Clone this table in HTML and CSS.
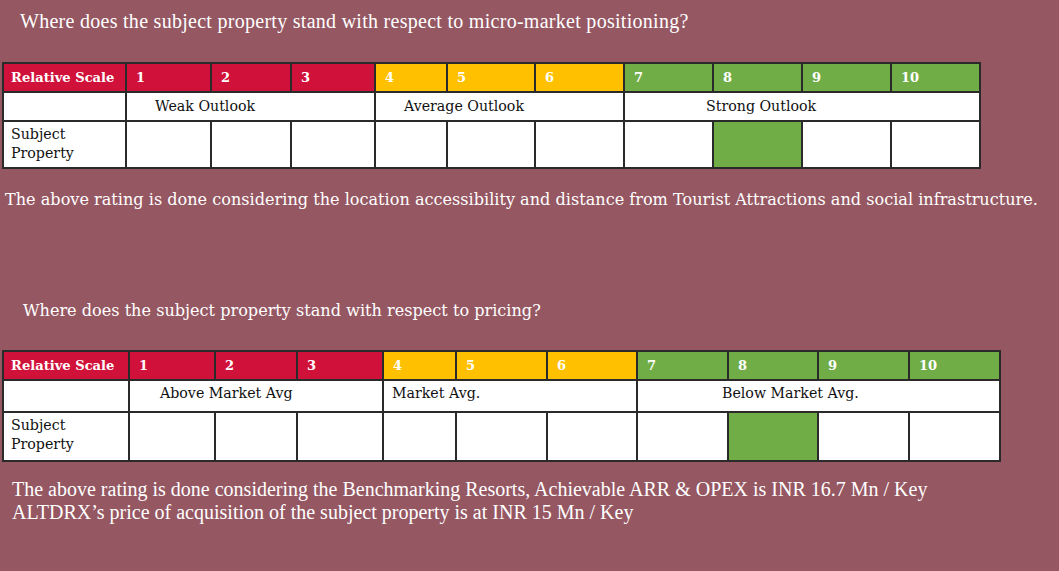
FILE: index.html
```html
<!DOCTYPE html>
<html>
<head>
<meta charset="utf-8">
<link rel="stylesheet" href="styles.css">
</head>
<body>
<div class="page">
  <h1 class="q q1">Where does the subject property stand with respect to micro-market positioning?</h1>

  <div class="scale scale-a">
    <div class="cell hd red lbl">Relative Scale</div>
    <div class="cell hd red">1</div>
    <div class="cell hd red">2</div>
    <div class="cell hd red">3</div>
    <div class="cell hd yel">4</div>
    <div class="cell hd yel">5</div>
    <div class="cell hd yel">6</div>
    <div class="cell hd grn">7</div>
    <div class="cell hd grn">8</div>
    <div class="cell hd grn">9</div>
    <div class="cell hd grn">10</div>

    <div class="cell band"></div>
    <div class="cell band span3 ind-weak">Weak Outlook</div>
    <div class="cell band span3 ind-avg">Average Outlook</div>
    <div class="cell band span4 ind-strong">Strong Outlook</div>

    <div class="cell subj">Subject<br>Property</div>
    <div class="cell"></div>
    <div class="cell"></div>
    <div class="cell"></div>
    <div class="cell"></div>
    <div class="cell"></div>
    <div class="cell"></div>
    <div class="cell"></div>
    <div class="cell mark"></div>
    <div class="cell"></div>
    <div class="cell"></div>
  </div>

  <p class="note note1">The above rating is done considering the location accessibility and distance from Tourist Attractions and social infrastructure.</p>

  <h2 class="q q2">Where does the subject property stand with respect to pricing?</h2>

  <div class="scale scale-b">
    <div class="cell hd red lbl">Relative Scale</div>
    <div class="cell hd red">1</div>
    <div class="cell hd red">2</div>
    <div class="cell hd red">3</div>
    <div class="cell hd yel">4</div>
    <div class="cell hd yel">5</div>
    <div class="cell hd yel">6</div>
    <div class="cell hd grn">7</div>
    <div class="cell hd grn">8</div>
    <div class="cell hd grn">9</div>
    <div class="cell hd grn">10</div>

    <div class="cell band"></div>
    <div class="cell band span3 ind-above">Above Market Avg</div>
    <div class="cell band span3 ind-mkt">Market Avg.</div>
    <div class="cell band span4 ind-below">Below Market Avg.</div>

    <div class="cell subj">Subject<br>Property</div>
    <div class="cell"></div>
    <div class="cell"></div>
    <div class="cell"></div>
    <div class="cell"></div>
    <div class="cell"></div>
    <div class="cell"></div>
    <div class="cell"></div>
    <div class="cell mark"></div>
    <div class="cell"></div>
    <div class="cell"></div>
  </div>

  <p class="note note2">The above rating is done considering the Benchmarking Resorts, Achievable ARR &amp; OPEX is INR 16.7 Mn / Key<br>ALTDRX’s price of acquisition of the subject property is at INR 15 Mn / Key</p>
</div>
</body>
</html>
```

FILE: styles.css
```css
* { box-sizing: border-box; }

html, body {
  margin: 0;
  padding: 0;
  background: #955762;
}

.page {
  width: 1059px;
  height: 571px;
  overflow: hidden;
  background: #955762;
  color: #ffffff;
}

.q {
  margin: 0;
  font-weight: normal;
}

.q1 {
  font-family: "Liberation Serif", serif;
  font-size: 20px;
  line-height: 24px;
  padding: 9px 0 0 20px;
  letter-spacing: 0.28px;
}

.scale {
  display: grid;
  gap: 2px;
  padding: 2px;
  background: #2a2a2a;
  margin-left: 2px;
  font-family: "DejaVu Serif", serif;
  color: #111;
}

.scale-a {
  width: 979px;
  margin-top: 29px;
  grid-template-columns: 121px 83px 78px 82px 70px 86px 87px 87px 87px 87px 87px;
  grid-template-rows: 27px 27px 45px;
}

.scale-b {
  width: 999px;
  margin-top: 27px;
  grid-template-columns: 124px 84px 80px 84px 71px 89px 88px 89px 88px 89px 89px;
  grid-template-rows: 27px 30px 47px;
}

.cell {
  background: #ffffff;
  font-size: 14.2px;
  line-height: 19px;
}

.hd {
  color: #ffffff;
  font-weight: bold;
  font-size: 13px;
  display: flex;
  align-items: center;
  padding-left: 9px;
}

.hd.lbl { padding-left: 7px; font-size: 13.1px; }

.red { background: #d0113a; }
.yel { background: #ffc000; }
.grn { background: #70ad47; }

.band {
  display: flex;
  align-items: center;
  padding-bottom: 1px;
}

.scale-b .band { padding-bottom: 6px; }

.span3 { grid-column: span 3; }
.span4 { grid-column: span 4; }

.ind-weak { padding-left: 28px; }
.ind-avg { padding-left: 28px; }
.ind-strong { padding-left: 81px; }
.ind-above { padding-left: 30px; }
.ind-mkt { padding-left: 8px; }
.ind-below { padding-left: 84px; }

.subj {
  padding: 3px 0 0 7px;
}

.mark { background: #70ad47; }

.note {
  margin: 0;
}

.note1 {
  font-family: "DejaVu Serif", serif;
  font-size: 16.1px;
  line-height: 24px;
  margin-top: 19px;
  padding-left: 5px;
  white-space: nowrap;
}

.q2 {
  font-family: "DejaVu Serif", serif;
  font-size: 16.1px;
  line-height: 24px;
  margin-top: 87px;
  padding-left: 23px;
}

.note2 {
  font-family: "Liberation Serif", serif;
  font-size: 20px;
  line-height: 23px;
  margin-top: 16px;
  padding-left: 12px;
  white-space: nowrap;
}
```
